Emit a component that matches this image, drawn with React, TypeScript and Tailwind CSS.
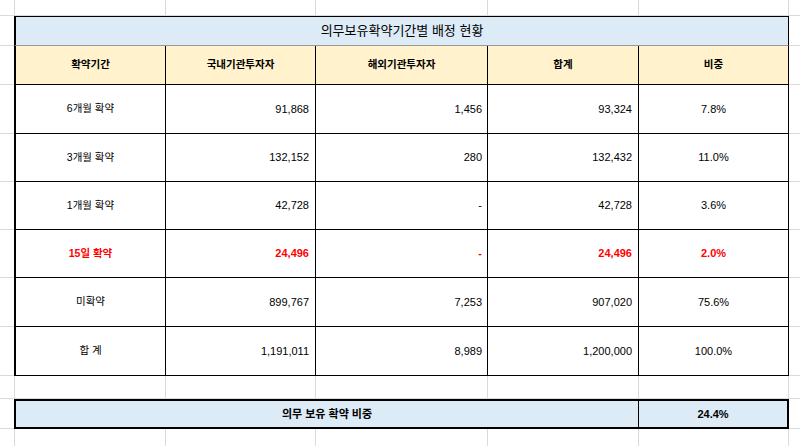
import React from "react";

const COLS = [151, 150, 172, 151, 150];
const COLW = ["w-[151px]", "w-[150px]", "w-[172px]", "w-[151px]", "w-[150px]"];
const TCOLW = ["w-[152px]", "w-[150px]", "w-[172px]", "w-[151px]", "w-[150px]"];

function GridRow({ h }: { h: string }) {
  return (
    <div className={`flex ${h}`}>
      <div className="w-[15px] shrink-0 border-r border-b border-[#dadada]" />
      {COLW.map((w, i) => (
        <div key={i} className={`${w} shrink-0 border-r border-b border-[#dadada]`} />
      ))}
      <div className="flex-1 border-b border-[#dadada]" />
    </div>
  );
}

type Row = { label: string; a: string; b: string; c: string; d: string; red?: boolean; h: string };

const rows: Row[] = [
  { label: "6개월 확약", a: "91,868", b: "1,456", c: "93,324", d: "7.8%", h: "h-[49px]" },
  { label: "3개월 확약", a: "132,152", b: "280", c: "132,432", d: "11.0%", h: "h-[48px]" },
  { label: "1개월 확약", a: "42,728", b: "-", c: "42,728", d: "3.6%", h: "h-[48px]" },
  { label: "15일 확약", a: "24,496", b: "-", c: "24,496", d: "2.0%", red: true, h: "h-[48px]" },
  { label: "미확약", a: "899,767", b: "7,253", c: "907,020", d: "75.6%", h: "h-[49px]" },
  { label: "합 계", a: "1,191,011", b: "8,989", c: "1,200,000", d: "100.0%", h: "h-[49px]" },
];

export default function App() {
  return (
    <div className="w-[800px] h-[446px] overflow-hidden bg-white text-black font-['Liberation_Sans','Noto_Sans_CJK_KR',sans-serif]">
      <GridRow h="h-[16px]" />

      {/* Title */}
      <div className="flex h-[30px]">
        <div className="w-[14px] shrink-0 border-b border-[#dadada]" />
        <div className="w-[775px] shrink-0 bg-[#ddebf7] border-t border-l-2 border-r border-black border-b border-b-[#9a9a9a] flex items-center justify-center text-[13px]">
          의무보유확약기간별 배정 현황
        </div>
        <div className="flex-1 border-b border-[#dadada]" />
      </div>

      {/* Header */}
      <div className="flex h-[39px]">
        <div className="w-[14px] shrink-0 border-b border-[#dadada]" />
        {["확약기간", "국내기관투자자", "해외기관투자자", "합계", "비중"].map((t, i) => (
          <div
            key={i}
            className={`${TCOLW[i]} shrink-0 bg-[#fff2cc] border-r border-b border-black ${i === 0 ? "border-l-2" : ""} flex items-center justify-center text-[10.5px] font-bold`}
          >
            {t}
          </div>
        ))}
        <div className="flex-1 border-b border-[#dadada]" />
      </div>

      {rows.map((r, ri) => {
        const tc = r.red ? "text-[#ff0000] font-bold" : "";
        return (
          <div key={ri} className={`flex ${r.h}`}>
            <div className="w-[14px] shrink-0 border-b border-[#dadada]" />
            <div className={`${TCOLW[0]} shrink-0 border-l-2 border-r border-b border-black flex items-center justify-center text-[10.5px] ${tc}`}>
              {r.label}
            </div>
            <div className={`${TCOLW[1]} shrink-0 border-r border-b border-black flex items-center justify-end pr-[6px] text-[11px] ${tc}`}>
              {r.a}
            </div>
            <div className={`${TCOLW[2]} shrink-0 border-r border-b border-black flex items-center justify-end pr-[5px] text-[11px] ${tc}`}>
              {r.b}
            </div>
            <div className={`${TCOLW[3]} shrink-0 border-r border-b border-black flex items-center justify-end pr-[6px] text-[11px] ${tc}`}>
              {r.c}
            </div>
            <div className={`${TCOLW[4]} shrink-0 border-r border-b border-black flex items-center justify-center text-[11px] ${tc}`}>
              {r.d}
            </div>
            <div className="flex-1 border-b border-[#dadada]" />
          </div>
        );
      })}

      <GridRow h="h-[23px]" />

      {/* Summary */}
      <div className="flex h-[30px]">
        <div className="w-[14px] shrink-0 border-b border-[#dadada]" />
        <div className="w-[625px] shrink-0 bg-[#ddebf7] border-t-2 border-l-2 border-b-2 border-r border-black flex items-center justify-center text-[11px] font-bold">
          의무 보유 확약 비중
        </div>
        <div className="w-[150px] shrink-0 bg-[#ddebf7] border-t-2 border-b-2 border-r-2 border-black flex items-center justify-center text-[11px] font-bold">
          24.4%
        </div>
        <div className="flex-1 border-b border-[#dadada]" />
      </div>

      <GridRow h="h-[30px]" />
    </div>
  );
}
